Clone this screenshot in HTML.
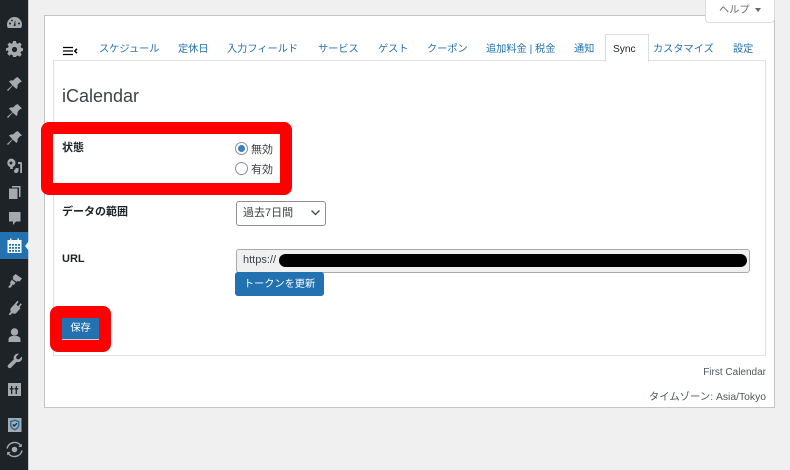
<!DOCTYPE html>
<html lang="ja"><head><meta charset="utf-8"><style>
html,body{margin:0;padding:0}
body{width:790px;height:470px;overflow:hidden;background:#f0f0f1;position:relative;font-family:"Liberation Sans","Noto Sans CJK JP",sans-serif;font-size:11px;color:#3c434a}
.a{position:absolute;white-space:nowrap;line-height:14px}
.tab{position:absolute;top:43px;color:#2271b1;font-size:10.2px;line-height:14px;white-space:nowrap}
svg.i{position:absolute;left:6px;width:17px;height:17px;fill:#a7aaad}
b{font-weight:bold;color:#1d2327}
</style></head><body>
<div style="position:absolute;left:0;top:0;width:28px;height:470px;background:#1d2327"></div>
<div style="position:absolute;left:28px;top:0;width:1px;height:470px;background:#c8c9cb"></div>
<div style="position:absolute;left:0;top:232px;width:28px;height:27px;background:#2271b1"></div>
<div style="position:absolute;left:25px;top:241px;border:5px solid transparent;border-left:0;border-right:4px solid #f0f0f1"></div>

<svg class="i" style="top:14px" viewBox="0 0 17 17"><path d="M8.5 3a7.500 7.500 0 0 0-7.500 7.500c0 1.300.3 2.500.9 3.500h13.200c.6-1 .9-2.200.9-3.500A7.500 7.500 0 0 0 8.500 3z"/><path d="M9.200 6 7.600 12h2z" fill="#1d2327"/><circle cx="4" cy="9.500" r="1" fill="#1d2327"/><circle cx="13" cy="9.500" r="1" fill="#1d2327"/><circle cx="6" cy="6.500" r=".9" fill="#1d2327"/></svg>
<svg class="i" style="top:41px" viewBox="0 0 17 17"><path d="M7 1h3l.4 2.100 1.500.6L13.700 2.500l2 2-1.200 1.800.6 1.500L17 8.200v2.800l-1.900.4-.6 1.500 1.200 1.800-2 2-1.800-1.200-1.500.6L10 17H7l-.4-1.900-1.500-.6-1.800 1.200-2-2 1.200-1.800-.6-1.500L0 11V8.200l2.100-.4.600-1.500L1.500 4.500l2-2 1.800 1.200 1.300-.6z" transform="translate(0 -1)"/><circle cx="8.500" cy="8.500" r="2.600" fill="#1d2327"/></svg>
<svg class="i" style="top:76px" viewBox="0 0 17 17"><path d="M11.500 1 16 5.500l-2 .8-2.500 2.700c.4 1.700 0 3-1 4L6.700 9.600 2 15l-1-1 5.400-4.700L3 5.500c1-1 2.300-1.400 4-1l2.700-2.500z"/></svg>
<svg class="i" style="top:103px" viewBox="0 0 17 17"><path d="M11.500 1 16 5.500l-2 .8-2.500 2.700c.4 1.700 0 3-1 4L6.700 9.600 2 15l-1-1 5.400-4.700L3 5.500c1-1 2.300-1.400 4-1l2.700-2.500z"/></svg>
<svg class="i" style="top:130px" viewBox="0 0 17 17"><path d="M11.500 1 16 5.500l-2 .8-2.500 2.700c.4 1.700 0 3-1 4L6.700 9.600 2 15l-1-1 5.400-4.700L3 5.500c1-1 2.300-1.400 4-1l2.700-2.500z"/></svg>
<svg class="i" style="top:157px" viewBox="0 0 17 17"><path d="M5 1.500a4.500 4.500 0 0 1 4.500 4.500c0 1.800-1.100 3.400-2.700 4.100V12H4.200v-1.900A4.500 4.500 0 0 1 5 1.500zm0 3a1.500 1.500 0 1 0 0 3 1.500 1.500 0 0 0 0-3z"/><path d="M12 5h2.500c1 0 1.500.6 1.500 1.500V16h-1.800V7H12z"/><path d="M9.500 11h3v2.500c0 1.400-1 2.500-2.300 2.500-1.400 0-2.200-.9-2.200-1.900s.7-1.600 1.500-1.700z"/></svg>
<svg class="i" style="top:184px" viewBox="0 0 17 17"><path d="M6 2h8.500v11H13V3.500H6z"/><path d="M3 4.500h8.500V15H3z"/></svg>
<svg class="i" style="top:210px" viewBox="0 0 17 17"><path d="M3 2h11.500v9.500H10L7 15v-3.500H3z"/></svg>
<svg class="i" style="top:237px;fill:#fff" viewBox="0 0 17 17"><path d="M1.500 3H4V1.500h1.500V3h6V1.500H13V3h2.500v13h-14zM3 7v1.800h2V7zm3 0v1.800h2V7zm3 0v1.800h2V7zm3 0v1.800h2V7zM3 10v1.800h2V10zm3 0v1.800h2V10zm3 0v1.800h2V10zm3 0v1.800h2V10zM3 13v1.700h2V13zm3 0v1.700h2V13zm3 0v1.700h2V13zm3 0v1.700h2V13z"/></svg>
<svg class="i" style="top:272px" viewBox="0 0 17 17"><path d="M9.500 2 16 6.500l-2.700 3.300-1.500-1-1 1.200L6.500 7l1-1.200-1-.9z"/><path d="M5.800 7.800l3.700 2.800-1.600 2.400-1.200-.6-1.600 2.900c-1 .6-2.200.5-3-.1l2.500-3.200-.6-1.200z"/></svg>
<svg class="i" style="top:299px" viewBox="0 0 17 17"><path d="M11.700 1.500l1.400 1-2.200 3.100 1.900 1.400 2.200-3.100 1.300 1-2.300 3.100 1 1-4.600 5.100c-1.300.6-2.600.4-3.600-.4l-2.100 2.400-1.500-1.300 2.200-2.400c-.7-1.100-.8-2.500-.1-3.600l4.700-5z" transform="translate(-.5 .3)"/></svg>
<svg class="i" style="top:327px" viewBox="0 0 17 17"><circle cx="8.500" cy="5" r="3.700"/><path d="M2.500 15v-2.500c0-2 2-3.500 3.800-3.500h4.400c1.800 0 3.800 1.500 3.800 3.500V15z"/></svg>
<svg class="i" style="top:352px" viewBox="0 0 17 17"><path d="M16 4.500c.5 2-.2 3.800-1.600 4.800-1.200.8-2.500 1-3.800.6L5.200 15.500c-.9.900-2.300.9-3 0-.8-.8-.7-2 .1-2.800l5.500-5.300c-.4-1.300-.2-2.700.6-3.800C9.400 2 11.200 1.400 13 1.800L10 4.800l.6 2.100 2.200.6z"/></svg>
<svg class="i" style="top:381px" viewBox="0 0 17 17"><path fill-rule="evenodd" d="M2 2h13v13H2zM5 5v2H3.800v1.500H5V13h1.300V8.500h1.200V7H6.300V5zm4.600 3.500V13h1.300V8.500h1.300V7h-1.300V5H9.700v2H8.500v1.500z"/></svg>
<svg class="i" style="top:417px" viewBox="0 0 17 17"><path d="M2 1h13.500v14H2z"/><path d="M8.700 3.200l4 1.300v3.300c0 2.500-1.700 4-4 4.900-2.300-.9-4-2.400-4-4.900V4.500z" fill="none" stroke="#2271b1" stroke-width="1.500"/><path d="M6.800 7.500l1.500 1.500 2.600-2.700" fill="none" stroke="#1d2327" stroke-width="1.300"/></svg>
<svg class="i" style="top:441px" viewBox="0 0 17 17"><circle cx="8.500" cy="8.500" r="2.800"/><path d="M1 7.500a7.700 7.700 0 0 1 14-2.500M16 9.500a7.700 7.700 0 0 1-14 2.500" fill="none" stroke="#a7aaad" stroke-width="1.500"/><path d="M15.800 2.500v3.500h-3.500zM1.200 14.500V11h3.500z"/></svg>

<div style="position:absolute;left:44px;top:15px;width:729px;height:391px;background:#fff;border:1px solid #c3c4c7"></div>
<div style="position:absolute;left:705px;top:0;width:68px;height:22px;background:#fff;border:1px solid #dcdcde;border-top:0;border-radius:0 0 4px 4px"></div>
<div class="a" style="left:719px;top:3px;font-size:10.200px;line-height:15px;color:#646970">ヘルプ</div>
<div style="position:absolute;left:755px;top:8px;border:3.500px solid transparent;border-top:4px solid #646970;border-bottom:0"></div>

<div style="position:absolute;left:53px;top:60px;width:711px;height:294px;border:1px solid #e0e0e0;background:#fff"></div>
<div style="position:absolute;left:605px;top:34px;width:42px;height:27px;background:#fff;border:1px solid #dcdcde;border-bottom:0"></div>

<svg style="position:absolute;left:62px;top:45px" width="17" height="11" viewBox="0 0 17 11"><path d="M1 2.500h10M1 6h10M1 9.500h10" stroke="#000" stroke-width="1.300"/><path d="M15 3.800 12.800 6 15 8.200" fill="none" stroke="#000" stroke-width="1.500"/></svg>

<span class="tab" style="left:99px">スケジュール</span>
<span class="tab" style="left:178px">定休日</span>
<span class="tab" style="left:227px">入力フィールド</span>
<span class="tab" style="left:318px">サービス</span>
<span class="tab" style="left:378px">ゲスト</span>
<span class="tab" style="left:427px">クーポン</span>
<span class="tab" style="left:486px">追加料金 | 税金</span>
<span class="tab" style="left:574px">通知</span>
<span class="tab" style="left:613px;color:#1d2327">Sync</span>
<span class="tab" style="left:653px">カスタマイズ</span>
<span class="tab" style="left:733px">設定</span>

<div class="a" style="left:62px;top:85px;font-size:18px;line-height:22px;color:#3c434a">iCalendar</div>

<div style="position:absolute;left:41px;top:122px;width:227px;height:49px;border:12px solid #f00;border-radius:8px;background:#fff"></div>
<div class="a" style="left:62px;top:141px"><b>状態</b></div>
<div style="position:absolute;left:235px;top:142px;width:11px;height:11px;border:1px solid #8c8f94;border-radius:50%;background:#fff"></div>
<div style="position:absolute;left:238px;top:145px;width:7px;height:7px;border-radius:50%;background:#3582c4"></div>
<div class="a" style="left:251px;top:143px">無効</div>
<div style="position:absolute;left:235px;top:162px;width:11px;height:11px;border:1px solid #8c8f94;border-radius:50%;background:#fff"></div>
<div class="a" style="left:251px;top:163px">有効</div>

<div class="a" style="left:62px;top:205px"><b>データの範囲</b></div>
<div style="position:absolute;left:236px;top:201px;width:88px;height:23px;border:1px solid #8c8f94;border-radius:3px;background:#fff"></div>
<div class="a" style="left:243px;top:206px">過去7日間</div>
<svg style="position:absolute;left:310px;top:209px" width="11" height="8" viewBox="0 0 11 8"><path d="M1.500 1.500 5.500 5.500 9.500 1.500" fill="none" stroke="#3c434a" stroke-width="1.300"/></svg>

<div class="a" style="left:62px;top:252px"><b>URL</b></div>
<div style="position:absolute;left:236px;top:249px;width:512px;height:22px;border:1px solid #a7aaad;border-radius:3px;background:#f0f0f1"></div>
<div class="a" style="left:243px;top:253px">https://</div>
<div style="position:absolute;left:279px;top:254px;width:468px;height:13px;border-radius:7px;background:#000"></div>
<div class="a" style="left:235px;top:272px;width:89px;height:24px;line-height:25px;background:#2271b1;color:#fff;border-radius:3px;text-align:center;font-size:10.200px">トークンを更新</div>

<div style="position:absolute;left:50px;top:306px;width:37px;height:22px;border:12px solid #f00;border-radius:8px;background:#fff"></div>
<div class="a" style="left:62px;top:318px;width:37px;height:21px;line-height:22px;background:#2271b1;color:#fff;text-align:center;font-size:10.200px;border-bottom:1px solid #d7c9d0">保存</div>

<div class="a" style="right:24px;top:366px;color:#50575e;font-size:10px">First Calendar</div>
<div class="a" style="right:24px;top:391px;color:#50575e;font-size:10.350px">タイムゾーン: Asia/Tokyo</div>
</body></html>
